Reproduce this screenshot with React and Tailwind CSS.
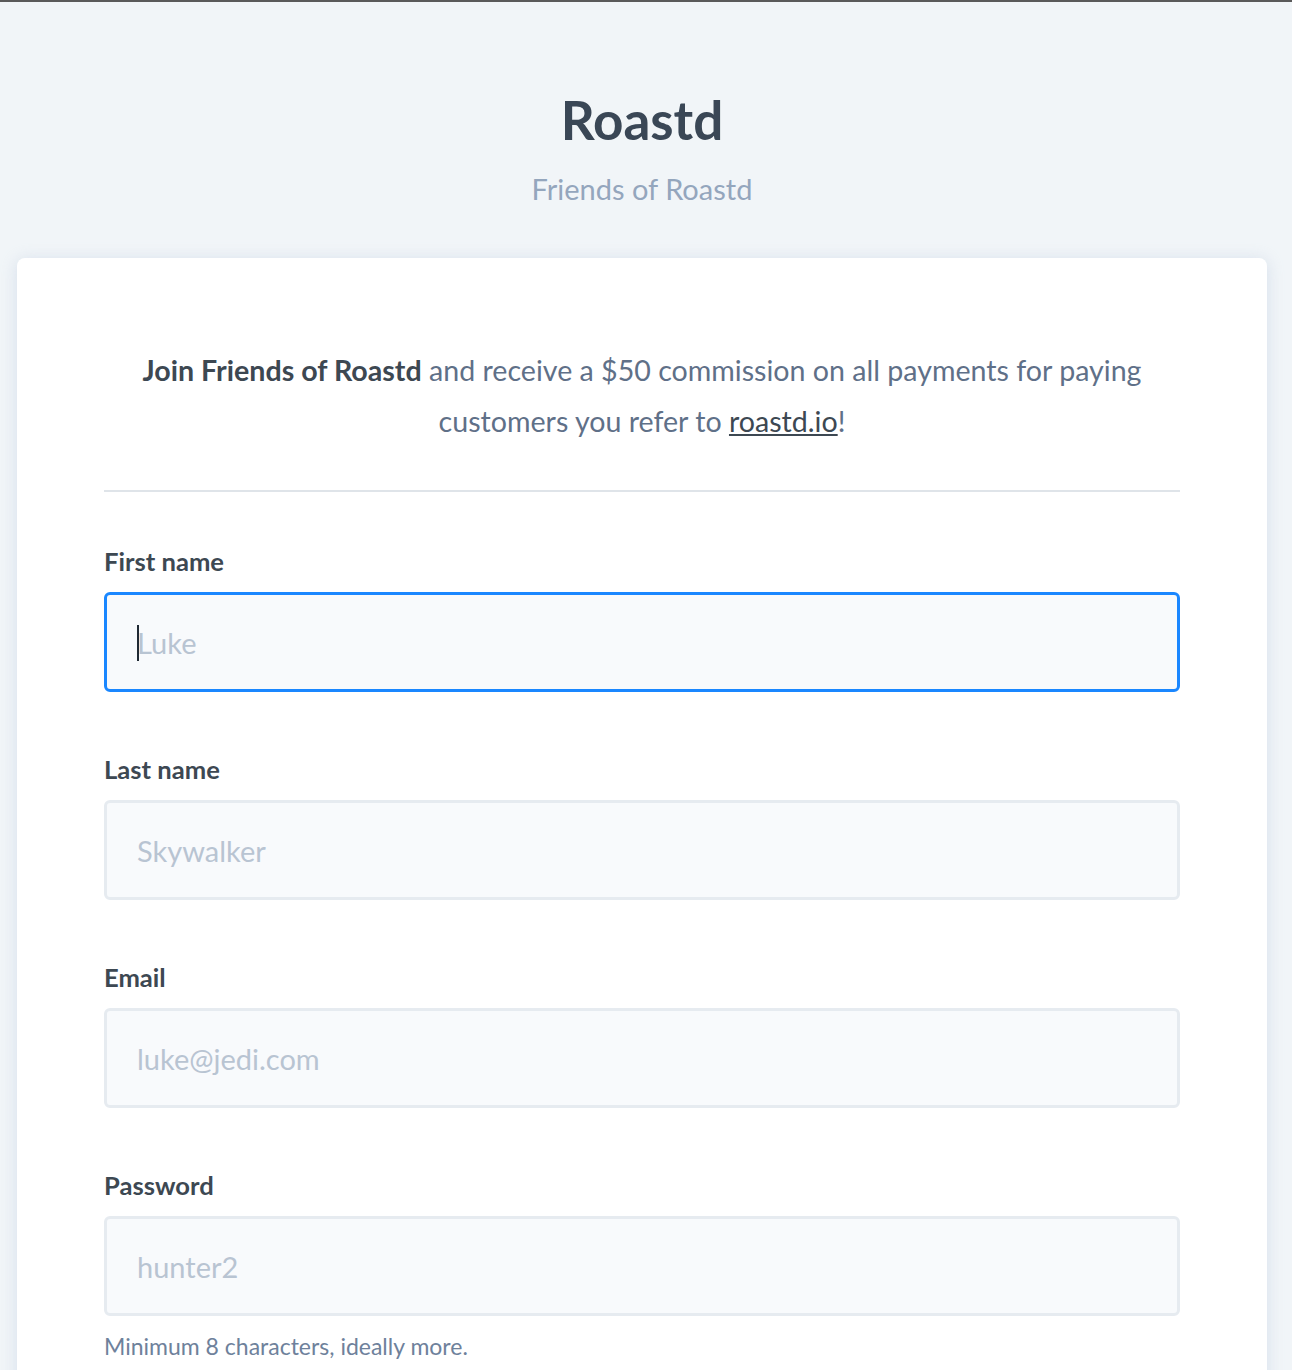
import React from "react";

const Field = ({ label, placeholder, focused, type = "text", help }) => (
  <div className="flex flex-col">
    <label className="text-[25.6px] leading-[30px] font-bold text-[#3d4852]">{label}</label>
    <div className="relative mt-[16px]">
      <input
        type={type}
        placeholder={placeholder}
        readOnly
        className={
          "block h-[100px] w-full rounded-[6px] border-[3px] bg-[#f8fafc] px-[30px] text-[29px] text-[#3d4852] outline-none placeholder:text-[#b8c4d2] " +
          (focused ? "border-[#1a87ff]" : "border-[#e6ebf0]")
        }
      />
      {focused && (
        <span className="pointer-events-none absolute left-[33px] top-[33px] h-[36px] w-[2px] bg-[#1f2933]" />
      )}
    </div>
    {help && (
      <p className="mt-[15px] text-[23px] leading-[30px] text-[#6e819b]">{help}</p>
    )}
  </div>
);

export default function App() {
  return (
    <div
      className="min-h-[1370px] bg-[#f1f5f8] border-t-2 border-[#5a5a5a]"
      style={{ fontFamily: "Lato, 'Open Sans', sans-serif" }}
    >
      <div className="w-[1284px]">
        <div className="flex flex-col items-center pt-[88px]">
          <h1 className="text-[53px] leading-[60px] font-bold text-[#3a4756]">Roastd</h1>
          <p className="mt-[22px] text-[29px] leading-[34px] text-[#94a6bd]">Friends of Roastd</p>
        </div>
        <div className="mx-[17px] mt-[52px] rounded-[8px] bg-white p-[87px] shadow-[0_2px_16px_rgba(180,195,220,0.45)]">
          <p className="text-center text-[28.6px] leading-[51px] text-[#5f7088]">
            <span className="font-bold text-[#3d4852]">Join Friends of Roastd</span> and receive a $50
            commission on all payments for paying customers you refer to{" "}
            <a className="text-[#3d4852] underline">roastd.io</a>!
          </p>
          <div className="mt-[43px] h-[2px] bg-[#dfe4e9]" />
          <div className="mt-[54px] flex flex-col gap-[62px]">
            <Field label="First name" placeholder="Luke" focused />
            <Field label="Last name" placeholder="Skywalker" />
            <Field label="Email" placeholder="luke@jedi.com" type="email" />
            <Field label="Password" placeholder="hunter2" type="password" help="Minimum 8 characters, ideally more." />
          </div>
        </div>
      </div>
    </div>
  );
}
